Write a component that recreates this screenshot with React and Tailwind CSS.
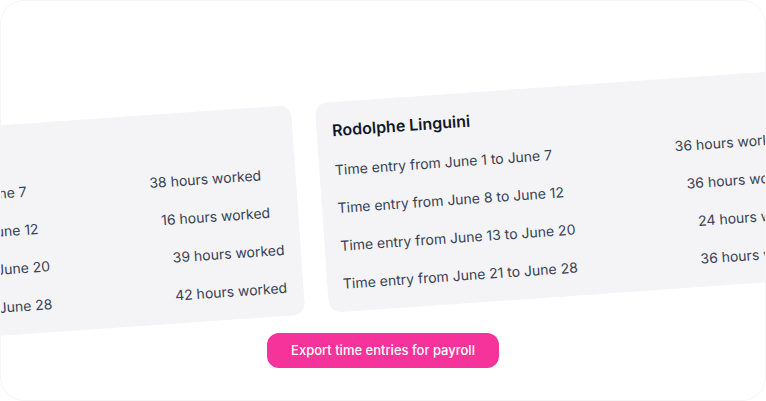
import React from "react";

const cards = [
  {
    name: "Colette Tatou",
    entries: [
      ["Time entry from June 1 to June 7", "38 hours worked"],
      ["Time entry from June 8 to June 12", "16 hours worked"],
      ["Time entry from June 13 to June 20", "39 hours worked"],
      ["Time entry from June 21 to June 28", "42 hours worked"],
    ],
  },
  {
    name: "Rodolphe Linguini",
    entries: [
      ["Time entry from June 1 to June 7", "36 hours worked"],
      ["Time entry from June 8 to June 12", "36 hours worked"],
      ["Time entry from June 13 to June 20", "24 hours worked"],
      ["Time entry from June 21 to June 28", "36 hours worked"],
    ],
  },
];

function EntryCard({ name, entries }) {
  return (
    <div className="shrink-0 rounded-xl bg-[#f4f4f6] px-4 pt-4 pb-[18px]">
      <h3 className="text-base leading-6 font-semibold text-gray-900">{name}</h3>
      <ul className="mt-[18px] flex flex-col gap-[18px]">
        {entries.map(([range, hours]) => (
          <li key={range} className="flex gap-[123px] text-sm leading-5 text-gray-700 whitespace-nowrap">
            <span>{range}</span>
            <span>{hours}</span>
          </li>
        ))}
      </ul>
    </div>
  );
}

export default function App() {
  return (
    <div className="bg-white" style={{ fontFamily: "Inter, 'Noto Sans', sans-serif" }}>
      <div className="flex h-[401px] flex-col items-center overflow-hidden rounded-3xl border border-[#f5f5f6] pt-[103px]">
        <div className="flex w-full justify-center">
          <div className="mr-[146px] flex shrink-0 gap-6 -rotate-[4deg]">
            {cards.map((c) => (
              <EntryCard key={c.name} {...c} />
            ))}
          </div>
        </div>
        <button
          type="button"
          className="mt-[19px] h-[35px] rounded-xl bg-pink-500 px-6 text-[13px] font-medium text-white"
        >
          Export time entries for payroll
        </button>
      </div>
    </div>
  );
}
